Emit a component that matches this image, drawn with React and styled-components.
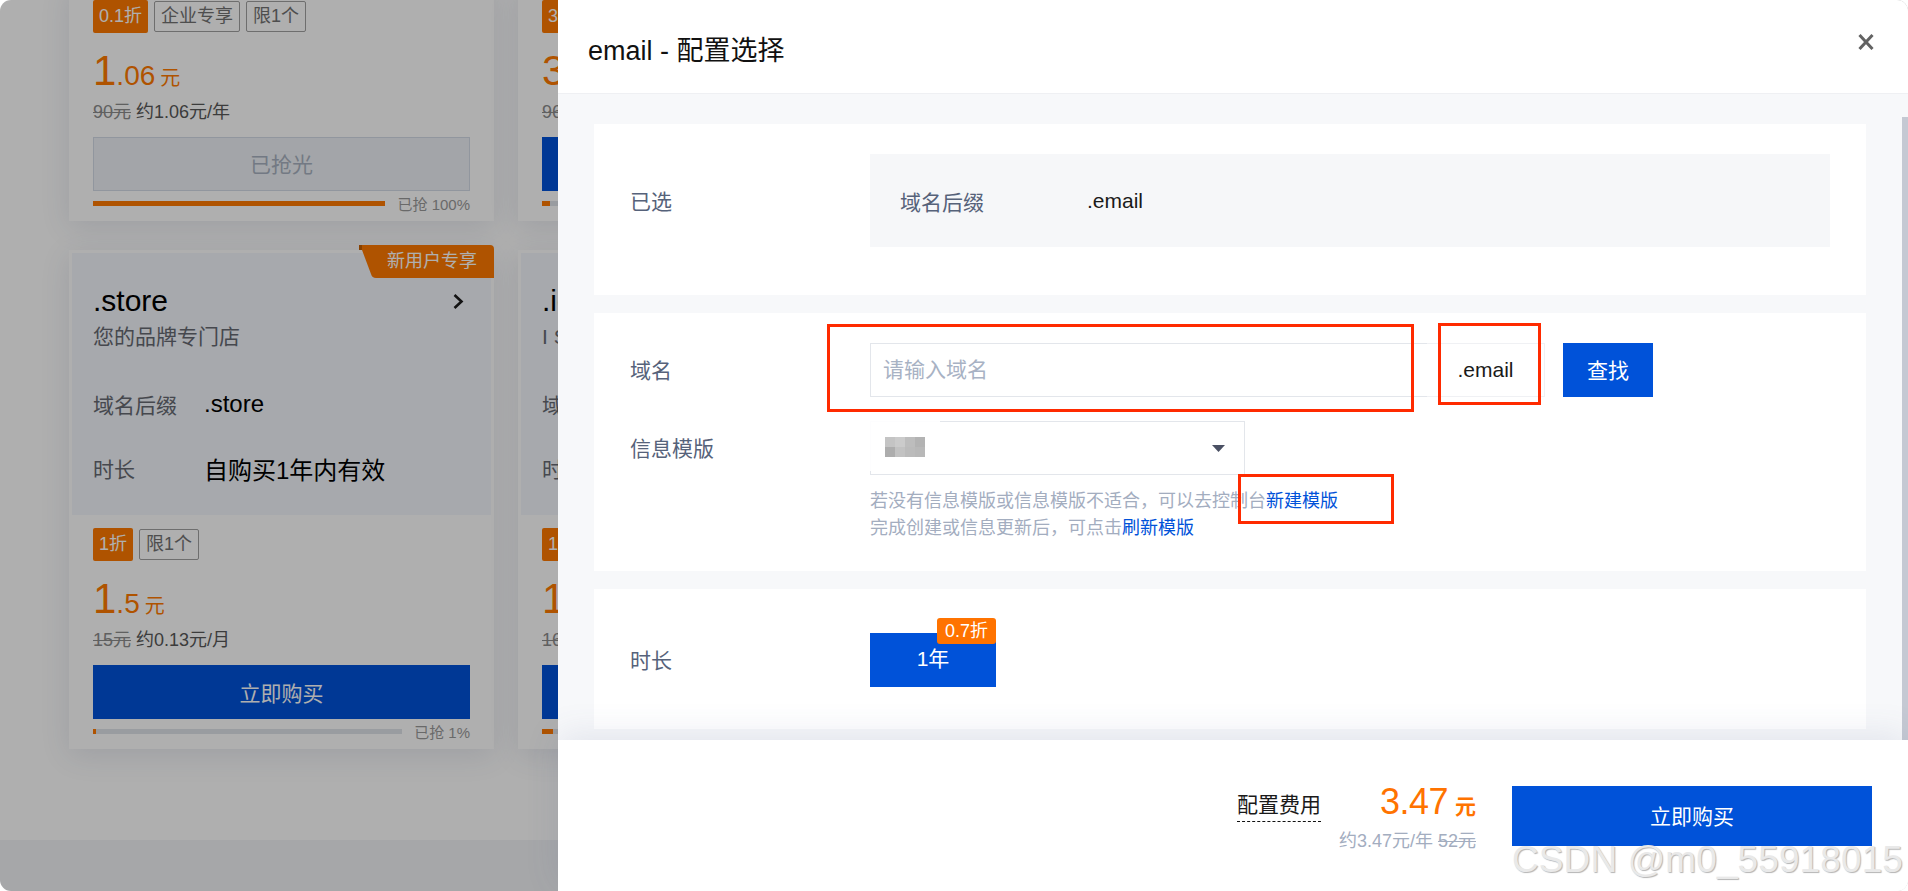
import React from 'react';
import styled, { createGlobalStyle } from 'styled-components';

const FONT = '"Liberation Sans", "Noto Sans CJK SC", sans-serif';

const GlobalStyle = createGlobalStyle`
  html, body {
    margin: 0;
    padding: 0;
    background: #fff;
    font-family: ${FONT};
  }
  * {
    box-sizing: border-box;
  }
`;

const Screen = styled.div`
  position: relative;
  width: 1908px;
  height: 891px;
  overflow: hidden;
  border-radius: 11px;
  background: #fff;
`;

const Page = styled.div`
  height: 100%;
  overflow: hidden;
  display: flex;
  flex-direction: column;
`;

const CardList = styled.div`
  flex: 1;
  display: grid;
  grid-template-columns: repeat(2, 425px);
  grid-auto-rows: min-content;
  column-gap: 24px;
  row-gap: 29px;
  margin-top: -16px;
  padding-left: 69px;
`;

const PageFooter = styled.div`
  height: 51px;
  background: #f2f3f6;
`;

const Card = styled.div`
  position: relative;
  padding: 3px;
  background: #fff;
  box-shadow: 0 6px 28px rgba(40, 60, 110, 0.12);
`;

const Hero = styled.div`
  height: 262px;
  padding: 30px 21px 0;
  background: #f3f6fc;
`;

const HeroTitle = styled.div`
  display: flex;
  align-items: center;
  justify-content: space-between;
  height: 36px;
  padding-right: 6px;
  font-size: 30px;
  color: #000;
`;

const HeroDesc = styled.div`
  margin-top: 3px;
  font-size: 21px;
  line-height: 30px;
  color: #666a72;
`;

const HeroRow = styled.div`
  display: flex;
  align-items: center;
  height: 36px;
  margin-top: ${(p) => p.$top}px;
`;

const HeroKey = styled.span`
  width: 111px;
  font-size: 21px;
  color: #666a72;
`;

const HeroValue = styled.span`
  font-size: 24px;
  color: #000;
`;

const NewUserBadge = styled.div`
  position: absolute;
  top: -5px;
  right: 0;
  width: 135px;
  height: 33px;
  padding-left: 28px;
  background: #ff7a00;
  clip-path: path('M0 0 H131 Q135 0 135 4 V33 H17 Q13 33 12 29 L3 5 H0 Z');
  color: #fff;
  font-size: 18px;
  line-height: 33px;
  white-space: nowrap;

  &::before {
    content: '';
    position: absolute;
    top: 0;
    left: 0;
    width: 3px;
    height: 5px;
    background: #c55f00;
  }
`;

const CardBody = styled.div`
  height: 231px;
  padding: 13px 21px 0;
`;

const TagRow = styled.div`
  display: flex;
  align-items: center;
  gap: 6px;
`;

const DiscountTag = styled.span`
  height: 33px;
  padding: 0 6px;
  background: #ff7a00;
  border-radius: 2px;
  color: #fff;
  font-size: 18px;
  line-height: 33px;
`;

const LimitTag = styled.span`
  height: 31px;
  padding: 0 6px;
  border: 1.5px solid #a0a0a0;
  border-radius: 2px;
  color: #727272;
  font-size: 18px;
  line-height: 28px;
`;

const Price = styled.div`
  display: flex;
  align-items: baseline;
  height: 42px;
  margin-top: 17px;
  color: #ff7a00;
  line-height: 42px;
`;

const PriceInt = styled.span`
  font-size: 42px;
`;

const PriceDec = styled.span`
  font-size: 28px;
`;

const PriceUnit = styled.span`
  margin-left: 5px;
  font-size: 20px;
`;

const PriceNote = styled.div`
  margin-top: 7px;
  font-size: 18px;
  line-height: 26px;
  color: #585858;
  white-space: nowrap;
`;

const OldPrice = styled.s`
  margin-right: 5px;
  color: #8c8c8c;
`;

const BuyButton = styled.button`
  display: block;
  width: 377px;
  height: 54px;
  margin-top: 12px;
  padding: 0 0 ${(p) => (p.disabled ? 3 : 0)}px;
  border: ${(p) => (p.disabled ? '1.5px solid #d4dbe6' : 'none')};
  border-radius: 0;
  background: ${(p) => (p.disabled ? '#eef1f6' : '#0052d9')};
  color: ${(p) => (p.disabled ? '#a8b1c0' : '#fff')};
  font-family: inherit;
  font-size: 21px;
`;

const Progress = styled.div`
  display: flex;
  align-items: center;
  gap: 12px;
  height: 20px;
  margin-top: 2px;
`;

const ProgressTrack = styled.div`
  flex: 1;
  height: 5px;
  background: #dfe3ea;
`;

const ProgressFill = styled.div`
  height: 100%;
  background: #ff7a00;
`;

const ProgressLabel = styled.span`
  font-size: 15px;
  color: #9a9a9a;
  white-space: nowrap;
`;

const Mask = styled.div`
  position: absolute;
  inset: 0;
  background: rgba(0, 0, 0, 0.315);
`;

const Drawer = styled.div`
  position: absolute;
  top: 0;
  right: 0;
  bottom: 0;
  width: 1350px;
  display: flex;
  flex-direction: column;
  background: #fff;
`;

const DrawerHeader = styled.div`
  flex: none;
  display: flex;
  align-items: center;
  justify-content: space-between;
  height: 94px;
  padding: 4px 34px 0 30px;
  border-bottom: 1.5px solid #eff0f3;
`;

const DrawerTitle = styled.h2`
  margin: 0;
  font-size: 27px;
  font-weight: 400;
  color: #111;
`;

const CloseButton = styled.button`
  display: flex;
  margin: 0 0 14px;
  padding: 0;
  border: none;
  background: none;
  color: #636363;
`;

const DrawerBody = styled.div`
  flex: 1;
  position: relative;
  overflow: hidden;
  display: flex;
  flex-direction: column;
  gap: 18px;
  padding: 30px 42px 0 36px;
  background: #f7f8fa;
`;

const ScrollThumb = styled.div`
  position: absolute;
  top: 23px;
  right: 0;
  bottom: 0;
  width: 6px;
  background: #c5c9d3;
`;

const Panel = styled.section`
  position: relative;
  flex: none;
  display: flex;
  align-items: ${(p) => p.$align || 'center'};
  padding: ${(p) => p.$padding};
  background: #fff;
`;

const PanelLabel = styled.div`
  flex: none;
  width: 240px;
  padding-bottom: 2px;
  font-size: 21px;
  color: #56627a;
`;

const SelectedBox = styled.div`
  display: flex;
  align-items: center;
  width: 960px;
  height: 93px;
  padding-left: 30px;
  background: #f6f7f9;
`;

const SelectedKey = styled.span`
  width: 187px;
  font-size: 21px;
  color: #56627a;
`;

const SelectedValue = styled.span`
  font-size: 21px;
  color: #1a1a1a;
`;

const FormRows = styled.div`
  display: flex;
  flex-direction: column;
  gap: 24px;
`;

const FormRow = styled.div`
  display: flex;
  align-items: center;
`;

const DomainInput = styled.input`
  width: 557px;
  height: 54px;
  padding: 0 12px;
  border: 1.5px solid #e3e6eb;
  border-right: none;
  border-radius: 0;
  outline: none;
  font-family: inherit;
  font-size: 21px;

  &::placeholder {
    color: #a8b2c4;
  }
`;

const InputSuffix = styled.div`
  width: 118px;
  height: 54px;
  border: 1.5px solid #f0f1f4;
  border-left: none;
  text-align: center;
  font-size: 21px;
  line-height: 51px;
  color: #1a1a1a;
`;

const SearchButton = styled.button`
  width: 90px;
  height: 54px;
  margin-left: 18px;
  padding: 0 0 3px;
  border: none;
  border-radius: 0;
  background: #0052d9;
  color: #fff;
  font-family: inherit;
  font-size: 21px;
`;

const TemplateSelect = styled.div`
  position: relative;
  display: flex;
  align-items: center;
  justify-content: flex-end;
  width: 375px;
  height: 54px;
  padding-right: 19px;
  border: 1.5px solid #e3e6eb;
`;

const BlurPatch = styled.div`
  position: absolute;
  top: -3px;
  left: -6px;
  width: 75px;
  height: 52px;
  padding: 18px 0 0 20px;
  background: rgba(255, 255, 255, 0.92);
`;

const Mosaic = styled.div`
  display: grid;
  grid-template-columns: repeat(4, 10px);
  grid-auto-rows: 10px;
`;

const MosaicCell = styled.i`
  background: ${(p) => p.$shade};
`;

const Caret = styled.svg`
  display: block;
  width: 13px;
  height: 7px;
  fill: #4a5063;
`;

const Hint = styled.div`
  margin-top: -11px;
  font-size: 18px;
  line-height: 27px;
  color: #a3adbf;
  white-space: nowrap;
`;

const HintLink = styled.a`
  color: #0052d9;
`;

const DurationButton = styled.div`
  position: relative;
  width: 126px;
  height: 54px;
  background: #0052d9;
  color: #fff;
  text-align: center;
  font-size: 21px;
  line-height: 52px;
`;

const DurationBadge = styled.span`
  position: absolute;
  top: -15px;
  right: 0;
  width: 59px;
  height: 26px;
  border-radius: 3px;
  background: #ff7300;
  font-size: 18px;
  line-height: 26px;
`;

const Annotation = styled.div`
  position: absolute;
  top: ${(p) => p.$top}px;
  left: ${(p) => p.$left}px;
  width: ${(p) => p.$width}px;
  height: ${(p) => p.$height}px;
  border: 3px solid #ff2a00;
  pointer-events: none;
`;

const DrawerFooter = styled.div`
  position: relative;
  flex: none;
  display: flex;
  justify-content: flex-end;
  gap: 36px;
  height: 151px;
  padding: 46px 36px 0 0;
  background: #fff;
  box-shadow: 0 -6px 32px rgba(70, 90, 140, 0.12);
`;

const FeeLabel = styled.span`
  align-self: flex-start;
  margin: 5px 18px 0 0;
  padding-bottom: 3px;
  border-bottom: 1.5px dashed #111;
  font-size: 21px;
  line-height: 27px;
  color: #1a1a1a;
`;

const FeeSummary = styled.div`
  display: flex;
  align-items: flex-start;
`;

const FeeColumn = styled.div`
  display: flex;
  flex-direction: column;
  align-items: flex-end;
`;

const FeeAmount = styled.div`
  height: 44px;
  margin-top: -6px;
  line-height: 44px;
  color: #ff7300;
  font-size: 36px;
  letter-spacing: -0.5px;
`;

const FeeUnit = styled.span`
  margin-left: 7px;
  font-size: 21px;
  font-weight: 700;
  letter-spacing: 0;
`;

const FeeNote = styled.div`
  margin-top: 5px;
  font-size: 18px;
  line-height: 24px;
  color: #a3adbf;
`;

const SubmitButton = styled.button`
  width: 360px;
  height: 60px;
  padding: 0 0 3px;
  border: none;
  border-radius: 0;
  background: #0052d9;
  color: #fff;
  font-family: inherit;
  font-size: 21px;
`;

const Watermark = styled.div`
  position: absolute;
  right: 5px;
  bottom: 14px;
  font-size: 37px;
  line-height: 34px;
  letter-spacing: 0.1px;
  color: #e9e9e9;
  text-shadow: 1px 1px 1px #b4b4b4;
  white-space: nowrap;
`;

const Chevron = () => (
  <svg width="11" height="15" viewBox="0 0 11 15" fill="none" stroke="#1c1c1c" strokeWidth="2.6">
    <path d="M1.5 1 L8.5 7.5 L1.5 14" />
  </svg>
);

const CloseIcon = () => (
  <svg width="16" height="16" viewBox="0 0 16 16" fill="none" stroke="currentColor" strokeWidth="3">
    <path d="M1.5 1 L14.5 15 M14.5 1 L1.5 15" />
  </svg>
);

// the right column lies mostly under the drawer, peek cards carry only what shows
const cards = [
  { id: 'a', discount: '0.1折', tags: ['企业专享', '限1个'], int: '1', dec: '.06', old: '90元', note: '约1.06元/年', sold: 100, soldOut: true },
  { id: 'b', peek: true, discount: '3折', tags: [], int: '3', dec: '', old: '96元', note: '', sold: 2 },
  { id: 'c', name: '.store', desc: '您的品牌专门店', discount: '1折', tags: ['限1个'], int: '1', dec: '.5', old: '15元', note: '约0.13元/月', sold: 1 },
  { id: 'd', peek: true, name: '.icu', desc: 'I See', discount: '1折', tags: [], int: '1', dec: '', old: '16元', note: '', sold: 3 },
];

const mosaicShades = ['#c4c4c4', '#cbcbcb', '#bdbdbd', '#b3b3b3', '#adadad', '#c2c2c2', '#bbbbbb', '#b8b8b8'];

const SaleCard = ({ card }) => (
  <Card>
    {card.name && (
      <React.Fragment>
        {!card.peek && <NewUserBadge>新用户专享</NewUserBadge>}
        <Hero>
          <HeroTitle>
            {card.name}
            {!card.peek && <Chevron />}
          </HeroTitle>
          <HeroDesc>{card.desc}</HeroDesc>
          <HeroRow $top={34}>
            <HeroKey>{card.peek ? '域' : '域名后缀'}</HeroKey>
            {!card.peek && <HeroValue>{card.name}</HeroValue>}
          </HeroRow>
          <HeroRow $top={28}>
            <HeroKey>{card.peek ? '时' : '时长'}</HeroKey>
            {!card.peek && <HeroValue>自购买1年内有效</HeroValue>}
          </HeroRow>
        </Hero>
      </React.Fragment>
    )}
    <CardBody>
      <TagRow>
        <DiscountTag>{card.discount}</DiscountTag>
        {card.tags.map((tag) => (
          <LimitTag key={tag}>{tag}</LimitTag>
        ))}
      </TagRow>
      <Price>
        <PriceInt>{card.int}</PriceInt>
        {!card.peek && (
          <React.Fragment>
            <PriceDec>{card.dec}</PriceDec>
            <PriceUnit>元</PriceUnit>
          </React.Fragment>
        )}
      </Price>
      <PriceNote>
        <OldPrice>{card.old}</OldPrice>
        {card.note}
      </PriceNote>
      <BuyButton disabled={card.soldOut}>
        {card.peek ? '' : card.soldOut ? '已抢光' : '立即购买'}
      </BuyButton>
      <Progress>
        <ProgressTrack>
          <ProgressFill style={{ width: `${card.sold}%` }} />
        </ProgressTrack>
        {!card.peek && <ProgressLabel>已抢 {card.sold}%</ProgressLabel>}
      </Progress>
    </CardBody>
  </Card>
);

const App = () => (
  <Screen>
    <GlobalStyle />
    <Page>
      <CardList>
        {cards.map((card) => (
          <SaleCard key={card.id} card={card} />
        ))}
      </CardList>
      <PageFooter />
    </Page>
    <Mask />
    <Drawer>
      <DrawerHeader>
        <DrawerTitle>email - 配置选择</DrawerTitle>
        <CloseButton>
          <CloseIcon />
        </CloseButton>
      </DrawerHeader>
      <DrawerBody>
        <ScrollThumb />
        <Panel $padding="30px 36px 48px">
          <PanelLabel>已选</PanelLabel>
          <SelectedBox>
            <SelectedKey>域名后缀</SelectedKey>
            <SelectedValue>.email</SelectedValue>
          </SelectedBox>
        </Panel>
        <Panel $align="flex-start" $padding="30px 36px 29px">
          <FormRows>
            <FormRow>
              <PanelLabel>域名</PanelLabel>
              <DomainInput placeholder="请输入域名" />
              <InputSuffix>.email</InputSuffix>
              <SearchButton>查找</SearchButton>
            </FormRow>
            <FormRow>
              <PanelLabel>信息模版</PanelLabel>
              <TemplateSelect>
                <BlurPatch>
                  <Mosaic>
                    {mosaicShades.map((shade, i) => (
                      <MosaicCell key={i} $shade={shade} />
                    ))}
                  </Mosaic>
                </BlurPatch>
                <Caret viewBox="0 0 13 7">
                  <polygon points="0,0 13,0 6.5,7" />
                </Caret>
              </TemplateSelect>
            </FormRow>
            <FormRow>
              <PanelLabel />
              <Hint>
                若没有信息模版或信息模版不适合，可以去控制台<HintLink>新建模版</HintLink>
                <br />
                完成创建或信息更新后，可点击<HintLink>刷新模版</HintLink>
              </Hint>
            </FormRow>
          </FormRows>
          <Annotation $top={11} $left={233} $width={587} $height={88} />
          <Annotation $top={10} $left={844} $width={103} $height={82} />
          <Annotation $top={161} $left={644} $width={156} $height={50} />
        </Panel>
        <Panel $padding="44px 36px 42px">
          <PanelLabel>时长</PanelLabel>
          <DurationButton>
            1年
            <DurationBadge>0.7折</DurationBadge>
          </DurationButton>
        </Panel>
      </DrawerBody>
      <DrawerFooter>
        <FeeSummary>
          <FeeLabel>配置费用</FeeLabel>
          <FeeColumn>
            <FeeAmount>
              3.47
              <FeeUnit>元</FeeUnit>
            </FeeAmount>
            <FeeNote>
              约3.47元/年 <s>52元</s>
            </FeeNote>
          </FeeColumn>
        </FeeSummary>
        <SubmitButton>立即购买</SubmitButton>
      </DrawerFooter>
      <Watermark>CSDN @m0_55918015</Watermark>
    </Drawer>
  </Screen>
);

export default App;
